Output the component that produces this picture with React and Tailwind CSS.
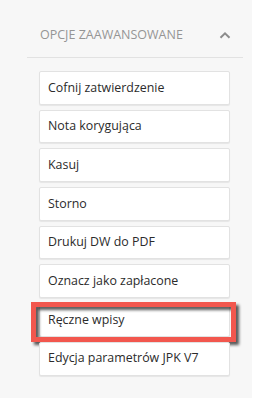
import React from 'react';

const options = [
  'Cofnij zatwierdzenie',
  'Nota korygująca',
  'Kasuj',
  'Storno',
  'Drukuj DW do PDF',
  'Oznacz jako zapłacone',
  'Ręczne wpisy',
  'Edycja parametrów JPK V7',
];

function ChevronUp() {
  return (
    <svg width="12" height="8" viewBox="0 0 12 8" className="shrink-0">
      <polyline
        points="1.5,6.8 6,2.3 10.5,6.8"
        fill="none"
        stroke="#8c8c8c"
        strokeWidth="2"
      />
    </svg>
  );
}

export default function App() {
  return (
    <div
      className="w-[264px] h-[398px] bg-white overflow-hidden"
      style={{ fontFamily: '"Open Sans", "Liberation Sans", sans-serif' }}
    >
      <div className="w-[252px] h-full bg-[#f7f7f7] pt-[13px]">
        {/* header */}
        <div className="ml-[27px] w-[216px] h-[45px] border-b border-[#e2e2e2] flex items-center justify-between pl-[13px] pr-[12px]">
          <span className="text-[12.5px] text-[#959595]">OPCJE ZAAWANSOWANE</span>
          <ChevronUp />
        </div>

        {/* options */}
        <div className="ml-[39px] w-[191px] mt-[13px] flex flex-col gap-[5px]">
          {options.map((label) => (
            <div key={label} className="relative">
              <div className="h-[33.7px] flex items-center pl-[8px] bg-white border border-[#e2e2e2] rounded-[2px] shadow-[0_1px_1px_rgba(0,0,0,0.07)] text-[12.4px] text-[#2b2b2b]">
                {label}
              </div>
              {label === 'Ręczne wpisy' && (
                <div className="absolute left-[-8px] top-[-1px] w-[205px] h-[40px] border-[5.5px] border-[#f2574e] drop-shadow-[3px_3px_1.5px_rgba(0,0,0,0.65)]" />
              )}
            </div>
          ))}
        </div>
      </div>
    </div>
  );
}
